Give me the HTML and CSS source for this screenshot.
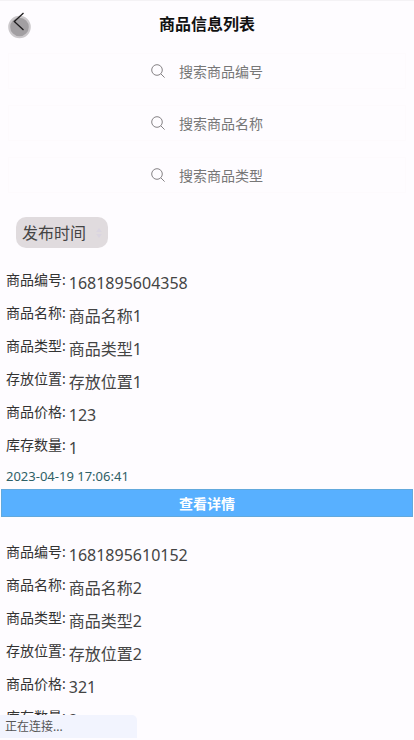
FILE: index.html
```html
<!DOCTYPE html>
<html lang="zh-CN">
<head>
    <meta charset="UTF-8">
    <meta name="viewport" content="width=device-width, initial-scale=1.0">
    <title>商品信息列表</title>
    <link rel="stylesheet" href="styles.css">
</head>
<body>
    <header class="header">
        <button class="back" type="button" aria-label="返回" onclick="history.back()">
            <svg width="28" height="34" viewBox="0 0 28 34">
                <circle cx="13.5" cy="21" r="10.3" fill="#a29fa2" stroke="#cbc8cb" stroke-width="2"/>
                <path d="M17.5 7 8.3 15.5l9.2 8.5" fill="none" stroke="#1c1a1c" stroke-width="1.3"/>
            </svg>
        </button>
        <h1 class="title">商品信息列表</h1>
    </header>

    <form class="search">
        <label class="search-box">
            <svg class="search-icon" width="14" height="14" viewBox="0 0 14 14">
                <circle cx="6" cy="6" r="5.3"/>
                <path d="M9.8 9.8 13.6 13.6"/>
            </svg>
            <input class="search-input" type="text" name="code" placeholder="搜索商品编号" aria-label="搜索商品编号">
        </label>
        <label class="search-box">
            <svg class="search-icon" width="14" height="14" viewBox="0 0 14 14">
                <circle cx="6" cy="6" r="5.3"/>
                <path d="M9.8 9.8 13.6 13.6"/>
            </svg>
            <input class="search-input" type="text" name="name" placeholder="搜索商品名称" aria-label="搜索商品名称">
        </label>
        <label class="search-box">
            <svg class="search-icon" width="14" height="14" viewBox="0 0 14 14">
                <circle cx="6" cy="6" r="5.3"/>
                <path d="M9.8 9.8 13.6 13.6"/>
            </svg>
            <input class="search-input" type="text" name="type" placeholder="搜索商品类型" aria-label="搜索商品类型">
        </label>
    </form>

    <div class="sort">
        <select class="sort-select" aria-label="排序">
            <option>发布时间</option>
        </select>
        <svg class="sort-arrows" width="6" height="10" viewBox="0 0 6 10">
            <path d="M0 4 3 0l3 4zM0 6l3 4 3-4z" fill="#dad5e0"/>
        </svg>
    </div>

    <main>
        <article class="item">
            <dl class="fields">
                <div class="field"><dt>商品编号:</dt><dd>1681895604358</dd></div>
                <div class="field"><dt>商品名称:</dt><dd>商品名称1</dd></div>
                <div class="field"><dt>商品类型:</dt><dd>商品类型1</dd></div>
                <div class="field"><dt>存放位置:</dt><dd>存放位置1</dd></div>
                <div class="field"><dt>商品价格:</dt><dd>123</dd></div>
                <div class="field"><dt>库存数量:</dt><dd>1</dd></div>
            </dl>
            <time class="date">2023-04-19 17:06:41</time>
            <button class="detail" type="button">查看详情</button>
        </article>
        <article class="item">
            <dl class="fields">
                <div class="field"><dt>商品编号:</dt><dd>1681895610152</dd></div>
                <div class="field"><dt>商品名称:</dt><dd>商品名称2</dd></div>
                <div class="field"><dt>商品类型:</dt><dd>商品类型2</dd></div>
                <div class="field"><dt>存放位置:</dt><dd>存放位置2</dd></div>
                <div class="field"><dt>商品价格:</dt><dd>321</dd></div>
                <div class="field"><dt>库存数量:</dt><dd>2</dd></div>
            </dl>
        </article>
    </main>

    <div class="status" role="status">正在连接...</div>
</body>
</html>
```
FILE: styles.css
```css
* {
    box-sizing: border-box;
}

html {
    height: 100%;
    overflow: hidden;
}

body {
    height: 100%;
    margin: 0;
    overflow: hidden;
    border-top: 1px solid #f4f2f5;
    background-color: #fefcff;
    color: #333;
    font-family: "Noto Sans", "Noto Sans CJK SC", sans-serif;
    font-size: 16px;
}

button,
input,
select {
    font-family: inherit;
}

.header {
    display: grid;
    grid-template-columns: 40px 1fr 40px;
    align-items: center;
    height: 44px;
    padding: 0 6px;
}

.back {
    display: flex;
    padding: 0;
    border: none;
    background: none;
    cursor: pointer;
}

.title {
    margin: 0;
    color: #111;
    font-size: 16px;
    text-align: center;
}

.search {
    display: flex;
    flex-direction: column;
    gap: 16px;
    padding: 8px;
}

.search-box {
    display: flex;
    align-items: center;
    justify-content: center;
    gap: 14px;
    height: 36px;
    border: 1px solid #fdfafd;
}

.search-icon {
    fill: none;
    stroke: #858285;
    stroke-width: 1;
}

.search-input {
    width: 6em;
    padding: 0;
    border: none;
    outline: none;
    background: none;
    color: #333;
    font-size: 14px;
}

.search-input::placeholder {
    color: #777;
}

.sort {
    display: grid;
    width: fit-content;
    margin: 16px 16px 20px;
    align-items: center;
}

.sort-select {
    grid-area: 1 / 1;
    height: 31px;
    padding: 0 21px 0 6px;
    border: none;
    border-radius: 10px;
    appearance: none;
    background-color: #e0dbde;
    color: #444;
    font-size: 16px;
}

.sort-arrows {
    grid-area: 1 / 1;
    justify-self: end;
    margin-right: 6px;
    pointer-events: none;
}

.item {
    display: flex;
    flex-direction: column;
    margin-bottom: 23px;
}

.fields {
    margin: 0;
}

.field {
    display: flex;
    gap: 3px;
    height: 33px;
    padding: 0 6px;
}

.field dt {
    font-size: 14px;
    line-height: 24px;
}

.field dd {
    margin: 0;
    color: #444;
    line-height: 30px;
}

.date {
    height: 23px;
    padding: 0 6px;
    color: #2f5f66;
    font-size: 13px;
    line-height: 20px;
}

.detail {
    height: 28px;
    margin: 0 1px;
    padding: 0;
    border: 1px solid #62a9dd;
    background-color: #58b0ff;
    color: #fff;
    font-size: 14px;
    font-weight: bold;
    cursor: pointer;
}

.status {
    position: fixed;
    bottom: 2px;
    left: 0;
    width: 137px;
    padding: 0 5px;
    border-radius: 0 5px 0 0;
    background-color: #f2f4fe;
    color: #555;
    font-size: 12px;
    line-height: 23px;
}
```
